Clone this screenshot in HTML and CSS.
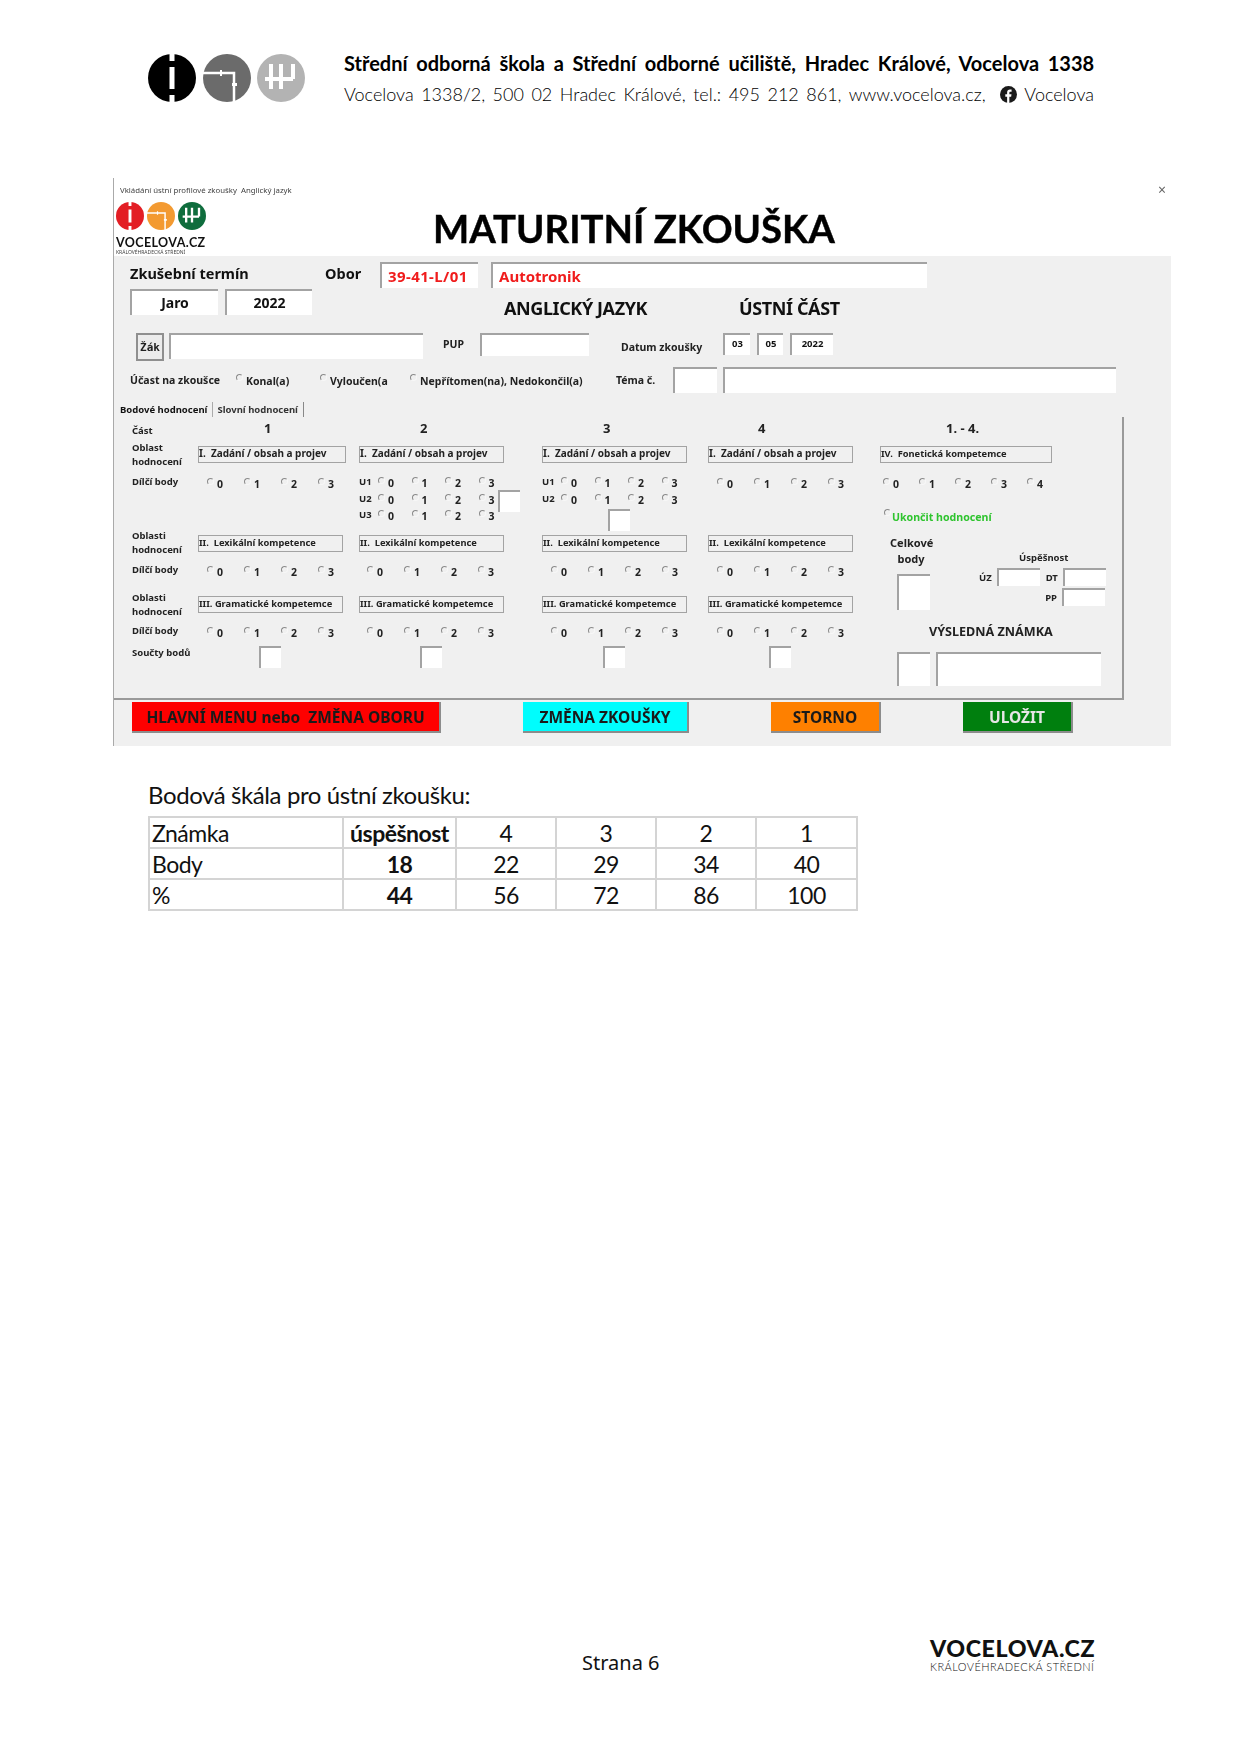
FILE: index.html
```html
<!DOCTYPE html>
<html lang="cs">
  <head>
    <meta charset="UTF-8" />
    <title>Maturitní zkouška</title>
    <link rel="stylesheet" href="styles.css">
  </head>
  <body>
    <svg class="defs" width="0" height="0">
      <symbol id="mark-i" viewBox="0 0 48 48">
        <circle cx="24" cy="24" r="24" fill="currentColor" />
        <path d="M24 0v7M24 13v22M24 41v7" stroke="#fff" stroke-width="5" fill="none" />
      </symbol>
      <symbol id="mark-t" viewBox="0 0 48 48">
        <circle cx="24" cy="24" r="24" fill="currentColor" />
        <path d="M0 19h31v29" stroke="#fff" stroke-width="2.5" fill="none" />
        <path d="M17 16h2v6h-2zM29 29h5v3h-5z" fill="#fff" />
      </symbol>
      <symbol id="mark-h" viewBox="0 0 48 48">
        <circle cx="24" cy="24" r="24" fill="currentColor" />
        <path d="M14 10v25M24 10v25M36 10v15M8 25h28" stroke="#fff" stroke-width="4" fill="none" />
      </symbol>
    </svg>

    <header class="letterhead">
      <div class="marks">
        <svg class="mark mark-black"><use href="#mark-i" /></svg>
        <svg class="mark mark-dark"><use href="#mark-t" /></svg>
        <svg class="mark mark-light"><use href="#mark-h" /></svg>
      </div>
      <div class="school">
        <div class="school-name">Střední odborná škola a Střední odborné učiliště, Hradec Králové, Vocelova 1338</div>
        <div class="school-contact">
          <span>Vocelova 1338/2, 500 02 Hradec Králové, tel.: 495 212 861, www.vocelova.cz,</span>
          <svg class="fb" viewBox="0 0 16 16">
            <circle cx="8" cy="8" r="8" fill="#1a1a1a" />
            <path d="M6.7 16V10H5V7.7h1.7V6c0-1.800 1-2.800 2.700-2.800h1.500v2.100h-1c-.8 0-1.100.4-1.100 1v1.400h2l-.3 2.300H8.800v6z" fill="#fff" />
          </svg>
          <span>Vocelova</span>
        </div>
      </div>
    </header>

    <section class="win">
      <div class="win-bar">
        <span>Vkládání ústní profilové zkoušky&nbsp; Anglický jazyk</span>
        <span class="win-close">×</span>
      </div>
      <div class="win-brand">
        <div class="brand">
          <div class="brand-marks">
            <svg class="brand-mark mark-red"><use href="#mark-i" /></svg>
            <svg class="brand-mark mark-orange"><use href="#mark-t" /></svg>
            <svg class="brand-mark mark-green"><use href="#mark-h" /></svg>
          </div>
          <div class="brand-word">VOCELOVA.CZ</div>
          <div class="brand-sub">KRÁLOVÉHRADECKÁ STŘEDNÍ</div>
        </div>
        <h1 class="title">MATURITNÍ ZKOUŠKA</h1>
      </div>

      <div class="win-body">
        <div class="row row-obor">
          <div class="big-label term-label">Zkušební termín</div>
          <div class="big-label obor-label">Obor</div>
          <div class="field red-value code-field">39-41-L/01</div>
          <div class="field red-value obor-field">Autotronik</div>
        </div>

        <div class="row row-term">
          <div class="field term-value jaro-field">Jaro</div>
          <div class="field term-value year-field">2022</div>
          <div class="subject">ANGLICKÝ JAZYK</div>
          <div class="subject part">ÚSTNÍ ČÁST</div>
        </div>

        <div class="row row-student">
          <button class="student-btn">Žák</button>
          <div class="field student-field"></div>
          <div class="small pup-label">PUP</div>
          <div class="field pup-field"></div>
          <div class="small date-label">Datum zkoušky</div>
          <div class="field date-field day">03</div>
          <div class="field date-field month">05</div>
          <div class="field date-field year">2022</div>
        </div>

        <div class="row row-attend">
          <div class="small attend-label">Účast na zkoušce</div>
          <label class="small attend attend-a"><i class="radio"></i>Konal(a)</label>
          <label class="small attend attend-b"><i class="radio"></i>Vyloučen(a</label>
          <label class="small attend attend-c"><i class="radio"></i>Nepřítomen(na), Nedokončil(a)</label>
          <div class="small topic-label">Téma č.</div>
          <div class="field topic-no"></div>
          <div class="field topic-name"></div>
        </div>

        <div class="tabs">
          <div class="tab tab-active">Bodové hodnocení</div>
          <div class="tab">Slovní hodnocení</div>
        </div>

        <div class="panel">
          <div class="score-grid">
            <!-- heading -->
            <div class="small part-label">Část</div>
            <div class="part-no no1">1</div>
            <div class="part-no no2">2</div>
            <div class="part-no no3">3</div>
            <div class="part-no no4">4</div>
            <div class="part-no no5">1. - 4.</div>

            <!-- I -->
            <div class="small area-label">Oblast<br />hodnocení</div>
            <div class="box-label box1">I.&nbsp; Zadání / obsah a projev</div>
            <div class="box-label">I.&nbsp; Zadání / obsah a projev</div>
            <div class="box-label">I.&nbsp; Zadání / obsah a projev</div>
            <div class="box-label">I.&nbsp; Zadání / obsah a projev</div>
            <div class="box-label box5 box-tight">IV.&nbsp; Fonetická kompetemce</div>

            <div class="small">Dílčí body</div>
            <div class="opts opts-1">
              <span class="opt"><i class="radio"></i>0</span><span class="opt"><i class="radio"></i>1</span><span class="opt"><i class="radio"></i>2</span><span class="opt"><i class="radio"></i>3</span>
            </div>
            <div class="u-wrap">
              <div class="u-rows">
                <div class="u-row"><b>U1</b><span class="opt"><i class="radio"></i>0</span><span class="opt"><i class="radio"></i>1</span><span class="opt"><i class="radio"></i>2</span><span class="opt"><i class="radio"></i>3</span></div>
                <div class="u-row"><b>U2</b><span class="opt"><i class="radio"></i>0</span><span class="opt"><i class="radio"></i>1</span><span class="opt"><i class="radio"></i>2</span><span class="opt"><i class="radio"></i>3</span></div>
                <div class="u-row"><b>U3</b><span class="opt"><i class="radio"></i>0</span><span class="opt"><i class="radio"></i>1</span><span class="opt"><i class="radio"></i>2</span><span class="opt"><i class="radio"></i>3</span></div>
              </div>
              <div class="field sum-box u-box"></div>
            </div>
            <div class="u-stack">
              <div class="u-row"><b>U1</b><span class="opt"><i class="radio"></i>0</span><span class="opt"><i class="radio"></i>1</span><span class="opt"><i class="radio"></i>2</span><span class="opt"><i class="radio"></i>3</span></div>
              <div class="u-row"><b>U2</b><span class="opt"><i class="radio"></i>0</span><span class="opt"><i class="radio"></i>1</span><span class="opt"><i class="radio"></i>2</span><span class="opt"><i class="radio"></i>3</span></div>
              <div class="field sum-box stack-box"></div>
            </div>
            <div class="opts opts-4">
              <span class="opt"><i class="radio"></i>0</span><span class="opt"><i class="radio"></i>1</span><span class="opt"><i class="radio"></i>2</span><span class="opt"><i class="radio"></i>3</span>
            </div>

            <!-- II -->
            <div class="small area-label area-two">Oblasti<br />hodnocení</div>
            <div class="box-label box-tight">II.&nbsp; Lexikální kompetence</div>
            <div class="box-label box-tight">II.&nbsp; Lexikální kompetence</div>
            <div class="box-label box-tight">II.&nbsp; Lexikální kompetence</div>
            <div class="box-label box-tight">II.&nbsp; Lexikální kompetence</div>

            <div class="small">Dílčí body</div>
            <div class="opts opts-1">
              <span class="opt"><i class="radio"></i>0</span><span class="opt"><i class="radio"></i>1</span><span class="opt"><i class="radio"></i>2</span><span class="opt"><i class="radio"></i>3</span>
            </div>
            <div class="opts opts-2">
              <span class="opt"><i class="radio"></i>0</span><span class="opt"><i class="radio"></i>1</span><span class="opt"><i class="radio"></i>2</span><span class="opt"><i class="radio"></i>3</span>
            </div>
            <div class="opts opts-3">
              <span class="opt"><i class="radio"></i>0</span><span class="opt"><i class="radio"></i>1</span><span class="opt"><i class="radio"></i>2</span><span class="opt"><i class="radio"></i>3</span>
            </div>
            <div class="opts opts-4">
              <span class="opt"><i class="radio"></i>0</span><span class="opt"><i class="radio"></i>1</span><span class="opt"><i class="radio"></i>2</span><span class="opt"><i class="radio"></i>3</span>
            </div>

            <!-- III -->
            <div class="small area-label">Oblasti<br />hodnocení</div>
            <div class="box-label box-tight">III. Gramatické kompetemce</div>
            <div class="box-label box-tight">III. Gramatické kompetemce</div>
            <div class="box-label box-tight">III. Gramatické kompetemce</div>
            <div class="box-label box-tight">III. Gramatické kompetemce</div>

            <div class="small">Dílčí body</div>
            <div class="opts opts-1">
              <span class="opt"><i class="radio"></i>0</span><span class="opt"><i class="radio"></i>1</span><span class="opt"><i class="radio"></i>2</span><span class="opt"><i class="radio"></i>3</span>
            </div>
            <div class="opts opts-2">
              <span class="opt"><i class="radio"></i>0</span><span class="opt"><i class="radio"></i>1</span><span class="opt"><i class="radio"></i>2</span><span class="opt"><i class="radio"></i>3</span>
            </div>
            <div class="opts opts-3">
              <span class="opt"><i class="radio"></i>0</span><span class="opt"><i class="radio"></i>1</span><span class="opt"><i class="radio"></i>2</span><span class="opt"><i class="radio"></i>3</span>
            </div>
            <div class="opts opts-4">
              <span class="opt"><i class="radio"></i>0</span><span class="opt"><i class="radio"></i>1</span><span class="opt"><i class="radio"></i>2</span><span class="opt"><i class="radio"></i>3</span>
            </div>

            <div class="small sum-label">Součty bodů</div>
            <div class="field sum-box sum1"></div>
            <div class="field sum-box sum2"></div>
            <div class="field sum-box sum3"></div>
            <div class="field sum-box sum4"></div>

            <!-- right column -->
            <div class="summary">
              <div class="opts opts-5">
                <span class="opt"><i class="radio"></i>0</span><span class="opt"><i class="radio"></i>1</span><span class="opt"><i class="radio"></i>2</span><span class="opt"><i class="radio"></i>3</span><span class="opt"><i class="radio"></i>4</span>
              </div>
              <div class="finish"><i class="radio"></i>Ukončit hodnocení</div>
              <div class="totals">
                <div class="total-col">
                  <div class="total-label">Celkové<br />body</div>
                  <div class="field total-box"></div>
                </div>
                <div class="rate-col">
                  <div class="small rate-title">Úspěšnost</div>
                  <div class="rate-row">
                    <span class="small">ÚZ</span>
                    <div class="field rate-field"></div>
                    <span class="small rate-gap">DT</span>
                    <div class="field rate-field"></div>
                  </div>
                  <div class="rate-row rate-row-end">
                    <span class="small">PP</span>
                    <div class="field rate-field"></div>
                  </div>
                </div>
              </div>
              <div class="result-title">VÝSLEDNÁ ZNÁMKA</div>
              <div class="result-row">
                <div class="field result-no"></div>
                <div class="field result-name"></div>
              </div>
            </div>
          </div>
        </div>

        <div class="actions">
          <button class="action action-red">HLAVNÍ MENU nebo&nbsp; ZMĚNA OBORU</button>
          <button class="action action-cyan">ZMĚNA ZKOUŠKY</button>
          <button class="action action-orange">STORNO</button>
          <button class="action action-green">ULOŽIT</button>
        </div>
      </div>
    </section>

    <section class="scale">
      <p class="scale-title">Bodová škála pro ústní zkoušku:</p>
      <table class="scale-table">
        <tr><td class="first">Známka</td><td class="strong">úspěšnost</td><td>4</td><td>3</td><td>2</td><td>1</td></tr>
        <tr><td class="first">Body</td><td class="strong">18</td><td>22</td><td>29</td><td>34</td><td>40</td></tr>
        <tr><td class="first">%</td><td class="strong">44</td><td>56</td><td>72</td><td>86</td><td>100</td></tr>
      </table>
    </section>

    <footer class="page-foot">
      <div class="page-no">Strana 6</div>
      <div class="foot-brand">
        <div class="foot-word">VOCELOVA.CZ</div>
        <div class="foot-sub">KRÁLOVÉHRADECKÁ STŘEDNÍ</div>
      </div>
    </footer>
  </body>
</html>
```

FILE: styles.css
```css
* {
  box-sizing: border-box;
}

body {
  margin: 0;
  background: #fff;
  color: #111;
  font-family: "Noto Sans", sans-serif;
}

.defs {
  display: block;
  height: 0;
}

/* letterhead */
.letterhead {
  display: flex;
  height: 178px;
  padding: 54px 0 0 148px;
}

.marks {
  display: flex;
  gap: 6.500px;
  width: 196px;
}

.mark {
  width: 48px;
  height: 48px;
}

.mark-black { color: #000; }
.mark-dark { color: #6b6b6b; }
.mark-light { color: #b3b3b3; }

.school {
  width: 750px;
  margin-top: -1px;
  font-family: Lato, sans-serif;
  color: #000;
}

.school-name {
  font-size: 20px;
  font-weight: 700;
  line-height: 20px;
  word-spacing: 3.800px;
  white-space: nowrap;
}

.school-contact {
  display: flex;
  align-items: center;
  margin-top: 10px;
  font-size: 18px;
  font-weight: 300;
  line-height: 22px;
  word-spacing: 2.600px;
  white-space: nowrap;
}

.fb {
  width: 17px;
  height: 17px;
  margin: 0 7px 0 auto;
}

/* window */
.win {
  width: 1058px;
  margin-left: 113px;
  border-left: 1px solid #aaa;
  filter: blur(0.35px);
}

.win-bar {
  display: flex;
  justify-content: space-between;
  height: 24px;
  padding: 6px 5px 0 6px;
  font-size: 7.800px;
  line-height: 12px;
  color: #444;
}

.win-close {
  font-size: 14px;
  color: #666;
}

.win-brand {
  display: flex;
  height: 54px;
}

.brand {
  width: 319px;
  padding-left: 2px;
}

.brand-marks {
  display: flex;
  gap: 3px;
}

.brand-mark {
  width: 28px;
  height: 28px;
}

.mark-red { color: #e31e24; }
.mark-orange { color: #f39a31; }
.mark-green { color: #0f6d3d; }

.brand-word {
  margin-top: 7px;
  font-size: 12.500px;
  line-height: 12px;
  font-weight: 700;
  font-family: Lato, sans-serif;
  letter-spacing: 0.4px;
}

.brand-sub {
  font-size: 5px;
  line-height: 6px;
  color: #444;
  white-space: nowrap;
}

.title {
  margin: 0;
  padding-top: 1px;
  font-family: Lato, sans-serif;
  font-size: 38.300px;
  line-height: 50px;
  font-weight: 700;
  color: #000;
  -webkit-text-stroke: 0.4px #000;
  white-space: nowrap;
}

.win-body {
  padding: 6px 0 13px;
  background: #f0f0f0;
}

.row {
  display: flex;
  padding-left: 16px;
}

.field {
  background: #fff;
  border-top: 2px solid #a3a3a3;
  border-left: 2px solid #a3a3a3;
}

.big-label {
  font-size: 14.500px;
  line-height: 22px;
  font-weight: 700;
}

.small {
  font-size: 9.500px;
  line-height: 13px;
  font-weight: 700;
  color: #222;
}

.row .small {
  font-size: 10.500px;
}

.row-obor {
  height: 26px;
}

.term-label { width: 195px; }
.obor-label { width: 55px; }

.red-value {
  color: #f01c1c;
  font-size: 15px;
  line-height: 24px;
  font-weight: 700;
  padding-left: 6px;
}

.code-field { width: 98px; letter-spacing: 0.4px; }
.obor-field { width: 436px; margin-left: 13px; }

.row-term {
  height: 26px;
  margin-top: 1px;
}

.term-value {
  font-size: 14px;
  line-height: 23px;
  font-weight: 700;
  text-align: center;
}

.jaro-field { width: 88px; }
.year-field { width: 87px; margin-left: 7px; }

.subject {
  margin: 7px 0 0 192px;
  font-size: 18px;
  line-height: 24px;
  font-weight: 700;
  letter-spacing: -0.4px;
  white-space: nowrap;
}

.subject.part {
  margin-left: 92px;
}

.row-student {
  margin-top: 18px;
  height: 28px;
}

.student-btn {
  width: 28px;
  height: 28px;
  margin-left: 6px;
  padding: 0;
  background: #ececec;
  border: 2px solid #8f8f8f;
  font: 700 11px "DejaVu Sans Mono", monospace;
  color: #222;
}

.student-field {
  width: 254px;
  height: 26px;
  margin-left: 5px;
}

.pup-label {
  width: 37px;
  margin-left: 20px;
  padding-top: 5px;
}

.pup-field {
  width: 109px;
  height: 23px;
}

.date-label {
  width: 102px;
  margin-left: 32px;
  padding-top: 8px;
  white-space: nowrap;
}

.date-field {
  height: 22px;
  font-size: 9.500px;
  line-height: 18px;
  font-weight: 700;
  text-align: center;
}

.date-field.day { width: 27px; }
.date-field.month { width: 26px; margin-left: 7px; }
.date-field.year { width: 43px; margin-left: 7px; }

.row-attend {
  height: 26px;
  margin-top: 6px;
}

.attend-label { width: 106px; padding-top: 7px; white-space: nowrap; }

.attend {
  display: flex;
  align-items: flex-start;
  padding-top: 8px;
  white-space: nowrap;
}

.attend .radio { margin-right: 3px; margin-top: -1px; }
.attend-a { width: 84px; }
.attend-b { width: 90px; }
.attend-c { width: 206px; }

.topic-label { width: 57px; padding-top: 7px; }
.topic-no { width: 44px; }
.topic-name { width: 393px; margin-left: 6px; }

.radio {
  display: inline-block;
  flex: none;
  width: 7px;
  height: 7px;
  border: 1px solid #f7f7f7;
  border-top-color: #8a8a8a;
  border-left-color: #8a8a8a;
  border-radius: 50%;
}

.tabs {
  display: flex;
  height: 15px;
  margin-top: 9px;
  padding-left: 6px;
}

.tab {
  padding-right: 5px;
  margin-right: 4px;
  border-right: 1px solid #888;
  font-size: 9.500px;
  line-height: 15px;
  font-weight: 700;
  color: #333;
}

.tab-active {
  border-right-color: #aaa;
  color: #111;
}

/* hodnoceni */
.panel {
  width: 1010px;
  height: 283px;
  padding: 4px 0 0 18px;
  border-right: 2px solid #9a9a9a;
  border-bottom: 2px solid #9a9a9a;
}

.score-grid {
  display: grid;
  grid-template-columns: 66px 161px 183px 166px 172px 239px;
  grid-template-rows: 23px 31px 58px 30px 31px 30px 20px 1fr;
}

.part-label {
  padding-top: 3px;
}

.part-no {
  margin-top: -2px;
  font-size: 13px;
  line-height: 18px;
  font-weight: 700;
  color: #222;
}

.no1 { padding-left: 66px; }
.no2 { padding-left: 61px; }
.no3 { padding-left: 61px; }
.no4 { padding-left: 50px; }
.no5 { padding-left: 66px; }

.area-label {
  line-height: 13.500px;
  margin-top: -3px;
}

.area-two {
  margin-top: -4px;
}

.sum-label {
  padding-top: 2px;
}

.box-label {
  width: 145px;
  height: 17px;
  margin-top: 2px;
  border: 1.500px solid #a3a3a3;
  font-size: 10px;
  line-height: 13px;
  font-weight: 700;
  color: #222;
  white-space: nowrap;
  overflow: hidden;
}

.box-tight {
  font-size: 9.300px;
}

.box1 { width: 148px; }
.box5 { width: 172px; }

.opts {
  display: flex;
  padding-top: 3px;
}

.opt {
  display: flex;
  flex: none;
  width: 37px;
  font-size: 10.500px;
  line-height: 12px;
  font-weight: 700;
  color: #222;
}

.opt .radio {
  margin: 0 3px 0 0;
}

.opts-1 { padding-left: 9px; }
.opts-2 { padding-left: 8px; }
.opts-3 { padding-left: 9px; }
.opts-4 { padding-left: 9px; }
.opts-5 { padding-left: 3px; }
.opts-5 .opt { width: 36px; }

.u-wrap {
  display: flex;
}

.u-rows {
  width: 139px;
  flex: none;
  padding-top: 1px;
}

.u-row {
  display: flex;
  height: 16.500px;
}

.u-row b {
  width: 19px;
  flex: none;
  font-size: 9.500px;
  line-height: 12px;
  color: #222;
}

.u-row .opt {
  width: 33.500px;
  padding-top: 1px;
}

.u-box {
  width: 21px;
  height: 21px;
  margin-top: 15px;
  flex: none;
}

.sum-box {
  width: 22px;
  height: 22px;
}

.stack-box {
  margin: 0 0 0 66px;
}

.u-stack {
  padding-top: 1px;
}

.sum1 { margin: 2px 0 0 61px; }
.sum2 { margin: 2px 0 0 61px; }
.sum3 { margin: 2px 0 0 61px; }
.sum4 { margin: 2px 0 0 61px; }

/* pravy sloupec */
.summary {
  grid-column: 6;
  grid-row: 3 / 9;
}

.finish {
  display: flex;
  margin: 21px 0 0 4px;
  font-size: 10.600px;
  line-height: 13px;
  font-weight: 700;
  color: #2fc42f;
}

.finish .radio {
  margin-right: 1px;
  margin-top: -2px;
}

.totals {
  display: flex;
  margin-top: 11px;
}

.total-col {
  width: 82px;
  padding-left: 17px;
}

.total-label {
  width: 42px;
  margin-left: -7px;
  font-size: 11px;
  line-height: 16px;
  font-weight: 700;
  color: #222;
  text-align: center;
  white-space: nowrap;
}

.total-box {
  width: 33px;
  height: 36px;
  margin-top: 7px;
}

.rate-col {
  width: 150px;
  margin-top: 16px;
}

.rate-title {
  padding-left: 57px;
}

.rate-row {
  display: flex;
  align-items: center;
  gap: 5px;
  margin: 4px 0 0 17px;
}

.rate-row + .rate-row {
  margin-top: 2px;
}

.rate-row-end {
  justify-content: flex-end;
  margin-right: 7px;
}

.rate-gap {
  margin-left: 1px;
}

.rate-field {
  width: 43px;
  height: 18px;
}

.result-title {
  margin: 13px 0 0 49px;
  font-size: 12.600px;
  line-height: 18px;
  font-weight: 700;
  color: #222;
}

.result-row {
  display: flex;
  gap: 6px;
  margin: 11px 0 0 17px;
}

.result-no {
  width: 33px;
  height: 34px;
}

.result-name {
  width: 165px;
  height: 34px;
}

.actions {
  display: flex;
  gap: 82px;
  height: 31px;
  margin-top: 2px;
  padding-left: 18px;
}

.action {
  padding: 0;
  border: 0;
  border-right: 2px solid #8c8c8c;
  border-bottom: 2px solid #8c8c8c;
  font: 700 15.500px "Noto Sans", sans-serif;
  color: #1a1a1a;
  white-space: nowrap;
}

.action-red { width: 309px; background: #fe0000; }
.action-cyan { width: 166px; background: #00fdfd; }
.action-orange { width: 110px; background: #fe8000; }
.action-green { width: 110px; background: #007f0e; color: #e6e6e6; }

/* bodova skala */
.scale {
  margin: 34px 0 0 148px;
  font-family: Lato, sans-serif;
  color: #111;
}

.scale-title {
  margin: 0;
  font-size: 24px;
  line-height: 30px;
  letter-spacing: -0.4px;
}

.scale-table {
  margin-top: 6px;
  width: 708px;
  height: 93px;
  border-collapse: collapse;
  table-layout: fixed;
  font-size: 23px;
  letter-spacing: -0.5px;
}

.scale-table td {
  padding: 1px 0 0;
  border: 2px solid #d4d4d4;
  line-height: 28px;
  text-align: center;
}

.scale-table td:nth-child(1) { width: 194px; }
.scale-table td:nth-child(2) { width: 113px; }
.scale-table td:nth-child(3) { width: 100px; }
.scale-table td:nth-child(4) { width: 100px; }
.scale-table td:nth-child(5) { width: 100px; }
.scale-table td:nth-child(6) { width: 101px; }

.scale-table td.first {
  padding-left: 2px;
  text-align: left;
}

.scale-table td.strong {
  font-weight: 700;
}

/* paticka */
.page-foot {
  display: flex;
  margin: 727px 0 0 582px;
}

.page-no {
  width: 348px;
  padding-top: 11px;
  font-size: 20px;
  line-height: 28px;
}

.foot-brand {
  width: 164px;
  font-family: Lato, sans-serif;
}

.foot-word {
  font-size: 23.200px;
  line-height: 20px;
  font-weight: 900;
  letter-spacing: 0.6px;
  white-space: nowrap;
}

.foot-sub {
  margin-top: 2px;
  font-size: 11px;
  font-weight: 300;
  line-height: 14px;
  letter-spacing: 0.45px;
  color: #111;
  white-space: nowrap;
}
```
